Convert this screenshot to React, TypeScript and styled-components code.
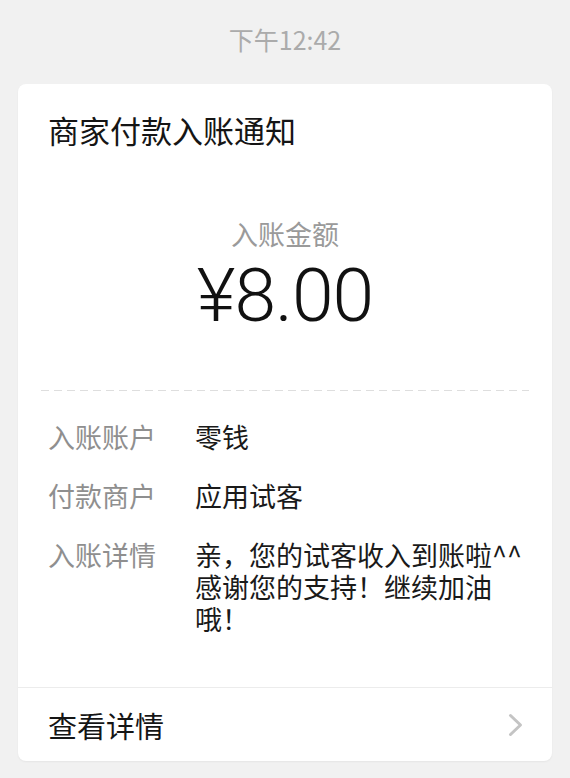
import React from "react";
import styled, { createGlobalStyle } from "styled-components";

const GlobalStyle = createGlobalStyle`
  html, body {
    margin: 0;
    padding: 0;
    background: #f1f1f1;
  }
  body {
    font-family: "Noto Sans CJK SC", "Noto Sans", sans-serif;
    -webkit-font-smoothing: antialiased;
  }
`;

const Page = styled.div`
  width: 570px;
  min-height: 778px;
  display: flex;
  flex-direction: column;
  align-items: center;
  padding-top: 24px;
  box-sizing: border-box;
`;

const Time = styled.div`
  font-size: 25px;
  line-height: 30px;
  color: #ababab;
  margin-bottom: 30px;
`;

const Card = styled.div`
  width: 534px;
  background: #ffffff;
  border-radius: 8px;
  box-shadow: 0 1px 2px rgba(0, 0, 0, 0.05);
  display: flex;
  flex-direction: column;
  overflow: hidden;
`;

const Body = styled.div`
  display: flex;
  flex-direction: column;
  padding: 26px 0 52px;
`;

const Title = styled.div`
  font-size: 31px;
  line-height: 40px;
  color: #151515;
  padding: 0 30px;
`;

const AmountBlock = styled.div`
  display: flex;
  flex-direction: column;
  align-items: center;
  margin-top: 66px;
`;

const AmountLabel = styled.div`
  font-size: 27px;
  line-height: 36px;
  color: #9a9a9a;
`;

const Amount = styled.div`
  font-family: Roboto, "Liberation Sans", sans-serif;
  font-weight: 300;
  font-size: 75px;
  line-height: 80px;
  letter-spacing: -1px;
  color: #111;
  margin-top: 3px;
`;

const Dashed = styled.div`
  height: 1px;
  margin: 55px 23px 0;
  background-image: linear-gradient(to right, #dedede 0 8px, transparent 8px 100%);
  background-size: 13px 1px;
  background-repeat: repeat-x;
`;

const Rows = styled.div`
  display: grid;
  grid-template-columns: 147px 1fr;
  row-gap: 27px;
  padding: 30px 20px 0 30px;
`;

const Label = styled.div`
  font-size: 27px;
  line-height: 32px;
  color: #8f8f8f;
`;

const Value = styled.div`
  font-size: 27px;
  line-height: 32px;
  color: #1a1a1a;
`;

const Footer = styled.div`
  height: 73px;
  border-top: 1px solid #ececec;
  display: flex;
  align-items: center;
  justify-content: space-between;
  padding: 0 27px 0 30px;
`;

const FooterText = styled.div`
  font-size: 29px;
  line-height: 36px;
  color: #151515;
`;

const Chevron = () => (
  <svg width="18" height="24" viewBox="0 0 18 24" fill="none">
    <path
      d="M3.5 2.5 L13.5 12 L3.5 21.5"
      stroke="#c4c4c4"
      strokeWidth="3"
      strokeLinecap="round"
      strokeLinejoin="round"
    />
  </svg>
);

const rows: { label: string; value: React.ReactNode }[] = [
  { label: "入账账户", value: "零钱" },
  { label: "付款商户", value: "应用试客" },
  {
    label: "入账详情",
    value: (
      <>
        亲，您的试客收入到账啦^^
        <br />
        感谢您的支持！继续加油哦！
      </>
    ),
  },
];

export default function App() {
  return (
    <>
      <GlobalStyle />
      <Page>
        <Time>下午12:42</Time>
        <Card>
          <Body>
            <Title>商家付款入账通知</Title>
            <AmountBlock>
              <AmountLabel>入账金额</AmountLabel>
              <Amount>¥8.00</Amount>
            </AmountBlock>
            <Dashed />
            <Rows>
              {rows.map((r) => (
                <React.Fragment key={r.label}>
                  <Label>{r.label}</Label>
                  <Value>{r.value}</Value>
                </React.Fragment>
              ))}
            </Rows>
          </Body>
          <Footer>
            <FooterText>查看详情</FooterText>
            <Chevron />
          </Footer>
        </Card>
      </Page>
    </>
  );
}
